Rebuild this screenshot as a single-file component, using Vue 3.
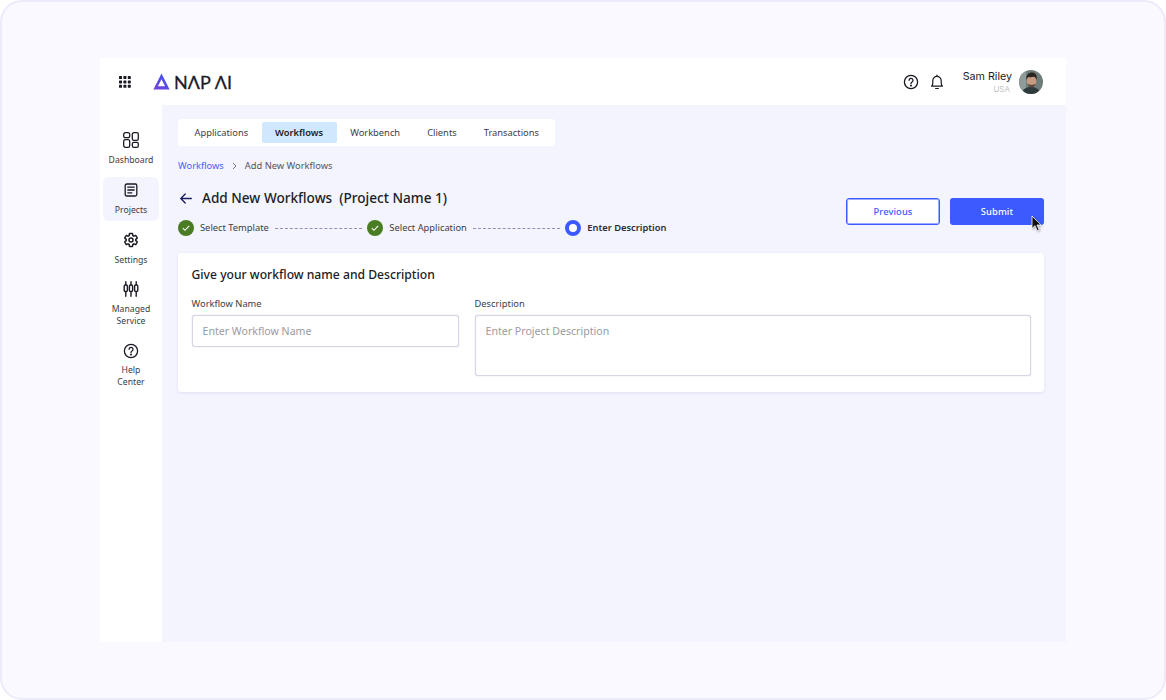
<script setup>
import { ref } from 'vue'

const navItems = ref([
  { id: 'dashboard', lines: ['Dashboard'] },
  { id: 'projects', lines: ['Projects'], active: true },
  { id: 'settings', lines: ['Settings'] },
  { id: 'managed', lines: ['Managed', 'Service'] },
  { id: 'help', lines: ['Help', 'Center'] }
])

const tabs = ref([
  { nome: 'Applications' },
  { nome: 'Workflows', active: true },
  { nome: 'Workbench' },
  { nome: 'Clients' },
  { nome: 'Transactions' }
])
</script>

<template>
  <div class="frame">
    <div class="app">
      <header class="topbar">
        <div class="brand">
          <svg class="grid-icon" width="12" height="12" viewBox="0 0 12 12" fill="#1a1a24">
            <template v-for="y in [0, 4.4, 8.8]" :key="y">
              <rect v-for="x in [0, 4.4, 8.8]" :key="x" :x="x" :y="y" width="3" height="3" rx="0.6" />
            </template>
          </svg>
          <svg class="logo-mark" width="17" height="17" viewBox="0 0 17 17">
            <defs>
              <linearGradient id="logoGrad" x1="0" y1="1" x2="1" y2="0">
                <stop offset="0" stop-color="#7b3fe0" />
                <stop offset="1" stop-color="#2f56f0" />
              </linearGradient>
            </defs>
            <path fill="url(#logoGrad)" fill-rule="evenodd" d="M8.5 0.5 L16.6 16.4 H0.4 Z M8.5 6.2 L4.9 13.2 H12.1 Z" />
          </svg>
          <span class="logo-text">NΛP ΛI</span>
        </div>
        <div class="top-right">
          <svg width="16" height="16" viewBox="0 0 16 16" fill="none" stroke="#1a1a24" stroke-width="1.3" stroke-linecap="round">
            <circle cx="8" cy="8" r="6.6" />
            <path d="M6.1 6.3a1.95 1.95 0 1 1 2.9 1.7c-.6.35-1 .7-1 1.4" />
            <circle cx="8" cy="11.6" r="0.4" fill="#1a1a24" />
          </svg>
          <svg class="bell" width="14" height="16" viewBox="0 0 14 16" fill="none" stroke="#1a1a24" stroke-width="1.2" stroke-linejoin="round" stroke-linecap="round">
            <path d="M1.6 12.2c.9-1 1.2-1.7 1.2-3.2V6.6a4.2 4.2 0 0 1 8.4 0V9c0 1.5.3 2.2 1.2 3.2Z" />
            <path d="M7 1v1.2M5.6 14.5h2.8" />
          </svg>
          <div class="user">
            <div class="user-name">Sam Riley</div>
            <div class="user-place">USA</div>
          </div>
          <svg class="avatar" width="24" height="24" viewBox="0 0 24 24">
            <defs>
              <clipPath id="avatarClip"><circle cx="12" cy="12" r="12" /></clipPath>
            </defs>
            <g clip-path="url(#avatarClip)">
              <rect width="24" height="24" fill="#6f7c79" />
              <rect x="0" y="0" width="7" height="24" fill="#8f9b98" />
              <path d="M3 24c.5-5 4-7 9-7s8.5 2 9 7Z" fill="#2f3a3c" />
              <ellipse cx="12.5" cy="11" rx="4.8" ry="6" fill="#c79a82" />
              <path d="M7.5 10c-.8-5 2-7.5 5.5-7.5S18.500 5 17.500 10c-.5-2-1.500-3-2.500-3.200-2 .5-4.500.5-5.500.2-1 .7-1.700 1.500-2 3Z" fill="#2b2522" />
              <path d="M8.5 13.500c.8 3.200 2.500 4 4 4s3.200-.8 4-4c-.8 1-2 1.300-4 1.300s-3.200-.3-4-1.300Z" fill="#5a473e" />
            </g>
          </svg>
        </div>
      </header>

      <div class="body">
        <aside class="sidebar">
          <div v-for="item in navItems" :key="item.id" class="nav-item" :class="[item.id, { active: item.active }]">
            <svg v-if="item.id === 'dashboard'" width="16" height="16" viewBox="0 0 16 16" fill="none" stroke="#1a1a24" stroke-width="1.3">
              <rect x="0.7" y="0.7" width="6" height="5" rx="1.6" />
              <rect x="0.7" y="7.7" width="6" height="7.6" rx="1.6" />
              <rect x="9.3" y="0.7" width="6" height="7.6" rx="1.6" />
              <rect x="9.3" y="10.3" width="6" height="5" rx="1.6" />
            </svg>
            <svg v-else-if="item.id === 'projects'" width="14" height="14" viewBox="0 0 14 14" fill="none" stroke="#1a1a24" stroke-width="1.3" stroke-linecap="round">
              <rect x="1.2" y="1" width="11.6" height="12" rx="1.5" />
              <path d="M3.8 4.2h6.4M3.8 7h6.4M3.8 9.8h4" />
            </svg>
            <svg v-else-if="item.id === 'settings'" width="16" height="16" viewBox="0 0 24 24" fill="none" stroke="#1a1a24" stroke-width="2.2" stroke-linejoin="round">
              <path d="M19.14 12.94c.04-.3.06-.61.06-.94 0-.32-.02-.64-.07-.94l2.03-1.58a.49.49 0 0 0 .12-.61l-1.92-3.32a.488.488 0 0 0-.59-.22l-2.39.96c-.5-.38-1.03-.7-1.62-.94l-.36-2.54a.484.484 0 0 0-.48-.41h-3.84c-.24 0-.43.17-.47.41l-.36 2.54c-.59.24-1.13.57-1.62.94l-2.39-.96c-.22-.08-.47 0-.59.22L2.74 8.87c-.12.21-.08.47.12.61l2.03 1.58c-.05.3-.09.63-.09.94s.02.64.07.94l-2.03 1.58a.49.49 0 0 0-.12.61l1.92 3.32c.12.22.37.29.59.22l2.39-.96c.5.38 1.03.7 1.62.94l.36 2.54c.05.24.24.41.48.41h3.84c.24 0 .44-.17.47-.41l.36-2.54c.59-.24 1.13-.56 1.62-.94l2.39.96c.22.08.47 0 .59-.22l1.92-3.32c.12-.22.07-.47-.12-.61l-2.01-1.58z" />
              <circle cx="12" cy="12" r="3" />
            </svg>
            <svg v-else-if="item.id === 'managed'" width="16" height="16" viewBox="0 0 16 16" fill="none" stroke="#1a1a24" stroke-width="1.4" stroke-linecap="round">
              <path d="M2.8 0.7v14.6M8 0.7v14.6M13.2 0.7v14.6" />
              <rect x="1.2" y="4" width="3.200" height="6.500" rx="1.200" fill="#fff" />
              <rect x="6.400" y="4" width="3.200" height="6.500" rx="1.200" fill="#fff" />
              <rect x="11.600" y="4" width="3.200" height="6.500" rx="1.200" fill="#fff" />
            </svg>
            <svg v-else width="16" height="16" viewBox="0 0 16 16" fill="none" stroke="#1a1a24" stroke-width="1.3" stroke-linecap="round">
              <circle cx="8" cy="8" r="6.6" />
              <path d="M6.1 6.3a1.95 1.95 0 1 1 2.9 1.7c-.6.35-1 .7-1 1.4" />
              <circle cx="8" cy="11.6" r="0.4" fill="#1a1a24" />
            </svg>
            <div class="nav-label">
              <div v-for="line in item.lines" :key="line">{{ line }}</div>
            </div>
          </div>
        </aside>

        <main class="main">
          <nav class="tabs">
            <div v-for="tab in tabs" :key="tab.nome" class="tab" :class="{ active: tab.active }">{{ tab.nome }}</div>
          </nav>

          <div class="crumbs">
            <span class="crumb-link">Workflows</span>
            <svg width="5" height="8" viewBox="0 0 5 8" fill="none" stroke="#777" stroke-width="1"><path d="M1 1l3 3-3 3" /></svg>
            <span>Add New Workflows</span>
          </div>

          <div class="head-row">
            <div>
              <div class="title-row">
                <svg width="12" height="11" viewBox="0 0 12 11" fill="none" stroke="#1c1c5e" stroke-width="1.3" stroke-linecap="round" stroke-linejoin="round">
                  <path d="M11.3 5.5H.8M5.2 1 .8 5.5 5.2 10" />
                </svg>
                <h1>Add New Workflows&nbsp; (Project Name 1)</h1>
              </div>
              <div class="steps">
                <div class="step">
                  <svg width="16" height="16" viewBox="0 0 16 16"><circle cx="8" cy="8" r="8" fill="#4a7c23" /><path d="M4.8 8.2l2.2 2.1 4.2-4.4" fill="none" stroke="#fff" stroke-width="1.1" /></svg>
                  <span>Select Template</span>
                </div>
                <div class="dash"></div>
                <div class="step">
                  <svg width="16" height="16" viewBox="0 0 16 16"><circle cx="8" cy="8" r="8" fill="#4a7c23" /><path d="M4.8 8.2l2.2 2.1 4.2-4.4" fill="none" stroke="#fff" stroke-width="1.1" /></svg>
                  <span>Select Application</span>
                </div>
                <div class="dash"></div>
                <div class="step current">
                  <div class="ring"></div>
                  <span>Enter Description</span>
                </div>
              </div>
            </div>
            <div class="actions">
              <button class="btn outline">Previous</button>
              <button class="btn solid">Submit</button>
              <svg class="cursor" width="12" height="17" viewBox="0 0 12 17">
                <path d="M1 1v12.5l3-2.8 2.2 5 2-.9-2.200-4.800h4.200Z" fill="#111" stroke="#fff" stroke-width="0.8" />
              </svg>
            </div>
          </div>

          <section class="card">
            <h2>Give your workflow name and Description</h2>
            <div class="fields">
              <div class="field">
                <label>Workflow Name</label>
                <div class="input">Enter Workflow Name</div>
              </div>
              <div class="field">
                <label>Description</label>
                <div class="input area">Enter Project Description</div>
              </div>
            </div>
          </section>
        </main>
      </div>
    </div>
  </div>
</template>

<style>
html, body {
  margin: 0;
  background: #fff;
}
</style>

<style scoped>
.frame {
  width: 1166px;
  height: 700px;
  box-sizing: border-box;
  padding: 56px 98px;
  border: 2px solid #ebebfa;
  border-radius: 22px;
  background: #f9f9ff;
  font-family: "Noto Sans", "Open Sans", sans-serif;
  color: #2b2b33;
  overflow: hidden;
}

.app {
  height: 584px;
  width: 966px;
  display: flex;
  flex-direction: column;
}

.topbar {
  height: 47px;
  flex: none;
  background: #fff;
  display: flex;
  align-items: center;
  justify-content: space-between;
  padding: 0 23px 0 19px;
}

.brand {
  display: flex;
  align-items: center;
}

.grid-icon {
  margin-right: 22px;
}

.logo-mark {
  margin-right: 4px;
}

.logo-text {
  font-family: "Lato", "Noto Sans", sans-serif;
  font-size: 18px;
  -webkit-text-stroke: 0.3px #1c1c26;
  color: #1c1c26;
  line-height: 20px;
}

.top-right {
  display: flex;
  align-items: center;
}

.bell {
  margin-left: 11px;
}

.user {
  margin-left: 19px;
  margin-right: 7px;
  text-align: right;
}

.user-name {
  font-family: "Inter", sans-serif;
  font-size: 10.7px;
  line-height: 14px;
  color: #1c1c26;
}

.user-place {
  font-family: "Inter", sans-serif;
  font-size: 8px;
  line-height: 10px;
  color: #c4c4c8;
  padding-right: 2px;
}

.body {
  flex: 1;
  display: flex;
  min-height: 0;
}

.sidebar {
  width: 62px;
  flex: none;
  background: #fff;
  padding-top: 22px;
  box-sizing: border-box;
}

.nav-item {
  width: 56px;
  margin-left: 3px;
  box-sizing: border-box;
  display: flex;
  flex-direction: column;
  align-items: center;
  border-radius: 6px;
  text-align: center;
}

.nav-item.dashboard {
  height: 50px;
  padding-top: 5px;
}

.nav-item.projects {
  height: 44px;
  padding-top: 6px;
}

.nav-item.settings {
  height: 60px;
  padding-top: 11px;
}

.nav-item.managed {
  height: 62px;
}

.nav-label {
  margin-top: 6px;
  font-size: 8.67px;
  line-height: 12px;
  color: #3d3d45;
}

.projects .nav-label {
  margin-top: 7px;
}

.help .nav-label {
  margin-top: 5px;
}

.nav-item.active {
  background: #f3f4fe;
}

.main {
  flex: 1;
  background: #f3f4fe;
  padding: 14px 22px 0 16px;
  min-width: 0;
}

.tabs {
  display: inline-flex;
  align-items: center;
  height: 27px;
  padding: 0 3px;
  background: #fff;
  border-radius: 3px;
  box-sizing: border-box;
  vertical-align: top;
}

.tab {
  font-size: 9.33px;
  line-height: 21px;
  height: 21px;
  padding: 0 13.5px;
  color: #3d3d45;
  border-radius: 2px;
}

.tab.active {
  background: #cfe8fd;
  font-weight: 600;
  color: #1c1c26;
}

.crumbs {
  display: flex;
  align-items: center;
  gap: 8px;
  margin-top: 13px;
  font-size: 9.33px;
  line-height: 14px;
  color: #55555e;
}

.crumb-link {
  color: #4a63f5;
}

.head-row {
  display: flex;
  justify-content: space-between;
  align-items: flex-start;
  margin-top: 15px;
}

.title-row {
  display: flex;
  align-items: center;
  gap: 10px;
  margin-left: 2px;
  height: 20px;
}

h1 {
  margin: 0;
  font-size: 13.6px;
  font-weight: 500;
  line-height: 20px;
  color: #1c1c26;
}

.steps {
  display: flex;
  align-items: center;
  margin-top: 12px;
  font-size: 9.33px;
  line-height: 16px;
  color: #3d3d45;
}

.step {
  display: flex;
  align-items: center;
  gap: 6px;
}

.step.current {
  font-weight: 600;
  color: #2b2b33;
}

.ring {
  width: 16px;
  height: 16px;
  box-sizing: border-box;
  border: 4px solid #3d5afe;
  border-radius: 50%;
  background: #fff;
}

.dash {
  width: 87.5px;
  margin: 0 5px 0 6px;
  border-top: 1px dashed #8f8fb8;
}

.actions {
  position: relative;
  display: flex;
  gap: 10px;
  margin-top: 10px;
}

.btn {
  width: 94px;
  height: 27px;
  box-sizing: border-box;
  border-radius: 3px;
  font-family: inherit;
  font-size: 9.33px;
  font-weight: 500;
  letter-spacing: 0.1px;
  padding: 0;
}

.btn.outline {
  background: #fff;
  border: 1px solid #3d5afe;
  box-shadow: inset 0 0 0 1px rgba(61, 90, 254, 0.5);
  color: #3d5afe;
}

.btn.solid {
  background: #3d5afe;
  border: none;
  color: #fff;
}

.cursor {
  position: absolute;
  right: 1px;
  top: 17px;
  filter: drop-shadow(1px 1px 1px rgba(0, 0, 0, 0.3));
}

.card {
  margin-top: 17px;
  height: 139px;
  box-sizing: border-box;
  background: #fff;
  border-radius: 3px;
  padding: 13px 13px 0 13.5px;
  box-shadow: 0 1px 3px rgba(100, 100, 170, 0.12);
}

h2 {
  margin: 0;
  font-size: 12.15px;
  font-weight: 500;
  line-height: 18px;
  color: #1c1c26;
}

.fields {
  display: flex;
  gap: 16px;
  margin-top: 13px;
}

.field {
  display: flex;
  flex-direction: column;
}

.field:first-child {
  width: 267px;
}

.field:last-child {
  flex: 1;
}

label {
  font-size: 9.33px;
  line-height: 13px;
  margin-bottom: 5px;
  color: #3d3d45;
}

.input {
  height: 32px;
  box-sizing: border-box;
  border: 1px solid #d6d6e6;
  border-radius: 3px;
  padding: 0 10px;
  font-size: 10.6px;
  line-height: 30px;
  color: #9a9aa2;
  background: #fff;
  box-shadow: 0 0 1px rgba(120, 120, 180, 0.5);
}

.input.area {
  height: 61px;
}
</style>
